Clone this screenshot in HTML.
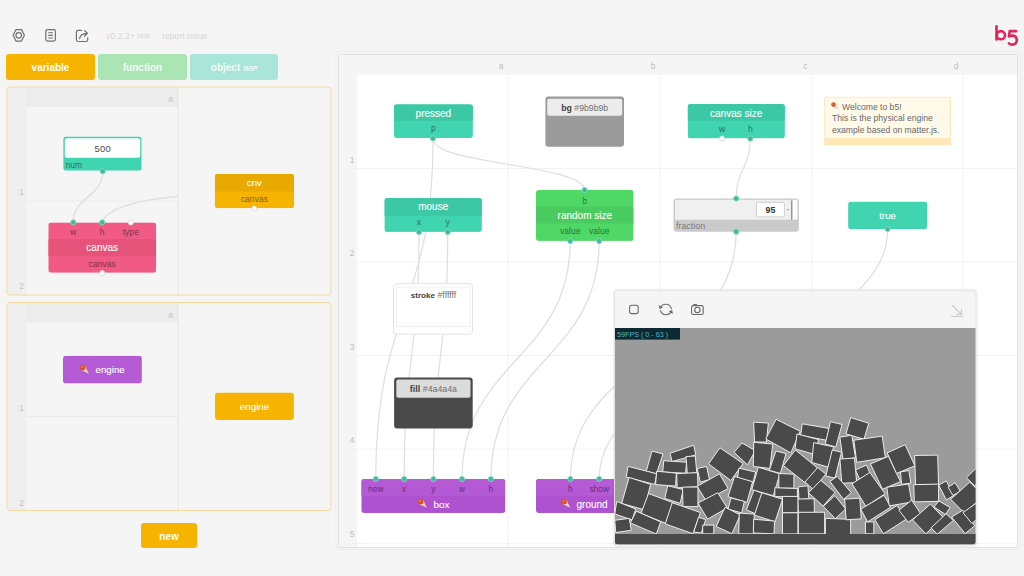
<!DOCTYPE html>
<html><head><meta charset="utf-8">
<style>
html,body{margin:0;padding:0;}
body{width:1024px;height:576px;overflow:hidden;background:#f5f5f5;position:relative;font-family:"Liberation Sans",sans-serif;}
.a{position:absolute;}
svg text{font-family:"Liberation Sans",sans-serif;}
.btn{position:absolute;top:54px;height:26px;border-radius:3px;color:#fff;font-weight:700;font-size:10px;line-height:28px;text-align:center;}
</style></head>
<body>

<svg class="a" style="left:0;top:0" width="330" height="50">
  <g fill="none" stroke="#707070" stroke-width="1.2">
    <path d="M13.1,35.35 L16,29.6 L21.5,29.6 L24.4,35.35 L21.5,41.1 L16,41.1 Z" stroke-linejoin="round"/>
    <circle cx="18.75" cy="35.35" r="2.8"/>
    <rect x="45.8" y="29.6" width="9.6" height="11.5" rx="1.8"/>
    <path d="M48.3,32.7 H52.9 M48.3,35.35 H52.9 M48.3,38 H52.9" stroke-width="1.1"/>
    <path d="M81.5,30.3 H78.2 Q76.4,30.3 76.4,32.1 V39.7 Q76.4,41.5 78.2,41.5 H85.9 Q87.7,41.5 87.7,39.7 V37.8" stroke-linecap="round" stroke-linejoin="round"/>
    <path d="M79.6,38.6 Q80.3,33.6 87,33.3 M84.6,30.6 L87.4,33.3 L84.6,36" stroke-linecap="round" stroke-linejoin="round"/>
  </g>
  <text x="106" y="39" font-size="8.8" fill="#d5d5d5">v0.2.2+<tspan font-size="6.6" dy="-1.5"> beta</tspan></text>
  <text x="162" y="39" font-size="8.7" fill="#d5d5d5">report issue</text>
</svg>
<svg class="a" style="left:0;top:0" width="1024" height="60">
  <g fill="none" stroke="#e0255e" stroke-width="2.6" stroke-linecap="round">
    <path d="M996.5,26.3 V39.5"/>
    <circle cx="1000.9" cy="35.2" r="4.1"/>
    <path d="M1016.1,31.1 H1009.7 L1008.9,36.4 Q1010.6,35.5 1012.6,35.6 Q1016.8,36 1016.8,40.3 Q1016.6,44.5 1012.4,44.6 Q1010.2,44.6 1008.9,43.3" stroke-linejoin="round"/>
  </g>
</svg>
<div class="btn" style="left:6px;width:89px;background:#f6b300;">variable</div>
<div class="btn" style="left:98px;width:89px;background:#ace5b4;color:rgba(255,255,255,0.88)">function</div>
<div class="btn" style="left:190px;width:88px;background:#a9e5d8;color:rgba(255,255,255,0.88)">object <i style="font-size:7.5px">WIP</i></div>
<div class="btn" style="left:141px;top:523px;width:56px;height:25px;line-height:27px;background:#f6b300;">new</div>

<svg class="a" style="left:0;top:0" width="1024" height="576">
<defs><filter id="sh" x="-5%" y="-5%" width="110%" height="110%"><feDropShadow dx="0" dy="0.5" stdDeviation="1" flood-color="#000" flood-opacity="0.15"/></filter></defs>
<rect x="7" y="87" width="324" height="208" rx="3" fill="#f5f5f5"/>
<rect x="8" y="87.5" width="170" height="19.5" fill="#ececec"/>
<rect x="8" y="87.5" width="18.5" height="207" fill="#efefef"/>
<line x1="26.5" y1="201" x2="178" y2="201" stroke="#ebebeb"/>
<line x1="178" y1="87" x2="178" y2="295" stroke="#efe6cf"/>
<text x="173" y="102" text-anchor="end" font-size="8.5" fill="#c3c3c3">a</text>
<text x="24" y="195" text-anchor="end" font-size="8.5" fill="#c3c3c3">1</text>
<text x="24" y="289" text-anchor="end" font-size="8.5" fill="#c3c3c3">2</text>
<rect x="7" y="87" width="324" height="208" rx="3" fill="none" stroke="#f1daa2" stroke-width="1"/>
<rect x="7" y="302.5" width="324" height="208.0" rx="3" fill="#f5f5f5"/>
<rect x="8" y="303.0" width="170" height="19.5" fill="#ececec"/>
<rect x="8" y="303.0" width="18.5" height="207.0" fill="#efefef"/>
<line x1="26.5" y1="416.6" x2="178" y2="416.6" stroke="#ebebeb"/>
<line x1="178" y1="302.5" x2="178" y2="510.5" stroke="#efe6cf"/>
<text x="173" y="317.5" text-anchor="end" font-size="8.5" fill="#c3c3c3">a</text>
<text x="24" y="411" text-anchor="end" font-size="8.5" fill="#c3c3c3">1</text>
<text x="24" y="505.5" text-anchor="end" font-size="8.5" fill="#c3c3c3">2</text>
<rect x="7" y="302.5" width="324" height="208.0" rx="3" fill="none" stroke="#f1daa2" stroke-width="1"/>
<rect x="336" y="51.3" width="684.5" height="498.2" rx="2" fill="none" stroke="#ececec" stroke-width="1"/>
<rect x="338.5" y="54.5" width="679" height="493" rx="1.5" fill="#fff" stroke="#e0e0e0"/>
<path d="M339,55 H1017 V75 H339 Z" fill="#f5f5f5"/>
<rect x="339" y="55" width="18" height="492" fill="#f5f5f5"/>
<line x1="508" y1="55" x2="508" y2="547" stroke="#f2f2f2"/>
<line x1="660" y1="55" x2="660" y2="547" stroke="#f2f2f2"/>
<line x1="812" y1="55" x2="812" y2="547" stroke="#f2f2f2"/>
<line x1="963" y1="55" x2="963" y2="547" stroke="#f2f2f2"/>
<line x1="339" y1="168.5" x2="1017" y2="168.5" stroke="#f2f2f2"/>
<line x1="339" y1="262" x2="1017" y2="262" stroke="#f2f2f2"/>
<line x1="339" y1="355.5" x2="1017" y2="355.5" stroke="#f2f2f2"/>
<line x1="339" y1="449" x2="1017" y2="449" stroke="#f2f2f2"/>
<line x1="339" y1="543.3" x2="1017" y2="543.3" stroke="#f2f2f2"/>
<text x="503.5" y="69" text-anchor="end" font-size="8.5" fill="#bdbdbd">a</text>
<text x="655.5" y="69" text-anchor="end" font-size="8.5" fill="#bdbdbd">b</text>
<text x="807.5" y="69" text-anchor="end" font-size="8.5" fill="#bdbdbd">c</text>
<text x="958.5" y="69" text-anchor="end" font-size="8.5" fill="#bdbdbd">d</text>
<text x="354.5" y="162.5" text-anchor="end" font-size="8.5" fill="#bdbdbd">1</text>
<text x="354.5" y="256" text-anchor="end" font-size="8.5" fill="#bdbdbd">2</text>
<text x="354.5" y="349.5" text-anchor="end" font-size="8.5" fill="#bdbdbd">3</text>
<text x="354.5" y="443" text-anchor="end" font-size="8.5" fill="#bdbdbd">4</text>
<text x="354.5" y="537.3" text-anchor="end" font-size="8.5" fill="#bdbdbd">5</text>
<g fill="none" stroke="#dedede" stroke-width="1.2">
<path d="M433,139 C433,164.5 584.6,164.5 584.6,190"/>
<path d="M433,139 C433,309.0 375.8,309.0 375.8,479"/>
<path d="M419,232 C419,355.5 404.2,355.5 404.2,479"/>
<path d="M447.7,232 C447.7,355.5 433.4,355.5 433.4,479"/>
<path d="M570.2,241 C570.2,360.0 462,360.0 462,479"/>
<path d="M599.2,241 C599.2,360.0 490.9,360.0 490.9,479"/>
<path d="M750.3,139 C750.3,168.75 736.2,168.75 736.2,198.5"/>
<path d="M736.2,231.7 C736.2,355.35 570.4,355.35 570.4,479"/>
<path d="M887.6,229 C887.6,354.0 599.2,354.0 599.2,479"/>
</g><g fill="none" stroke="#e0e0e0" stroke-width="1.5">
<path d="M102.7,171.3 C102.7,196.85000000000002 73.3,196.85000000000002 73.3,222.4"/>
<path d="M102.2,222.4 C108,205 150,199 178,196.5"/>
</g>
<g><clipPath id="c63_136"><rect x="63.2" y="136.5" width="78.5" height="34.2" rx="3"/></clipPath><g clip-path="url(#c63_136)"><rect x="63.2" y="136.5" width="78.5" height="34.2" rx="0" fill="#41d4b0" /></g></g>
<rect x="64.8" y="138.3" width="75.4" height="19.5" rx="2" fill="#fff" />
<text x="102.7" y="151.6" font-size="9.4" fill="#4a4a4a" text-anchor="middle" font-weight="400" letter-spacing="0.2">500</text>
<text x="65.5" y="167.6" font-size="8.5" fill="rgba(0,0,0,0.4)" text-anchor="start" font-weight="400" stroke="rgba(0,0,0,0.2)" stroke-width="0.28">num</text>
<circle cx="102.7" cy="171.3" r="2.6" fill="#46b697" stroke="#7fdcc4" stroke-width="0.9"/>
<g><clipPath id="c48_222"><rect x="48.3" y="222.4" width="107.9" height="50.4" rx="3"/></clipPath><g clip-path="url(#c48_222)"><rect x="48.3" y="222.4" width="107.9" height="50.4" rx="0" fill="#f15a84" /><rect x="48.3" y="239.2" width="107.9" height="17.1" rx="0" fill="#e5537b" /></g></g>
<text x="73.3" y="235.2" font-size="8.6" fill="rgba(0,0,0,0.4)" text-anchor="middle" font-weight="400" stroke="rgba(0,0,0,0.2)" stroke-width="0.28">w</text>
<text x="102.2" y="235.2" font-size="8.6" fill="rgba(0,0,0,0.4)" text-anchor="middle" font-weight="400" stroke="rgba(0,0,0,0.2)" stroke-width="0.28">h</text>
<text x="130.8" y="235.2" font-size="8.6" fill="rgba(0,0,0,0.4)" text-anchor="middle" font-weight="400" stroke="rgba(0,0,0,0.2)" stroke-width="0.28">type</text>
<text x="102.2" y="251.3" font-size="10" fill="#fff" text-anchor="middle" font-weight="400" stroke="#fff" stroke-width="0.1">canvas</text>
<text x="102.2" y="267" font-size="8.6" fill="rgba(0,0,0,0.4)" text-anchor="middle" font-weight="400" stroke="rgba(0,0,0,0.2)" stroke-width="0.28">canvas</text>
<circle cx="73.3" cy="222.4" r="2.6" fill="#46b697" stroke="#7fdcc4" stroke-width="0.9"/>
<circle cx="102.2" cy="222.4" r="2.6" fill="#46b697" stroke="#7fdcc4" stroke-width="0.9"/>
<circle cx="130.8" cy="222.4" r="2.6" fill="#fff" stroke="#d0d0d0" stroke-width="0.8"/>
<circle cx="102.2" cy="273" r="2.6" fill="#fff" stroke="#d0d0d0" stroke-width="0.8"/>
<g><clipPath id="c214_174"><rect x="214.8" y="174" width="79.3" height="34.2" rx="3"/></clipPath><g clip-path="url(#c214_174)"><rect x="214.8" y="174" width="79.3" height="34.2" rx="0" fill="#f6b300" /><rect x="214.8" y="174" width="79.3" height="17.4" rx="0" fill="#e9a900" /></g></g>
<text x="254.4" y="186.3" font-size="9.7" fill="#fff" text-anchor="middle" font-weight="400" stroke="#fff" stroke-width="0.1">cnv</text>
<text x="254.4" y="202.2" font-size="8.6" fill="rgba(0,0,0,0.4)" text-anchor="middle" font-weight="400" stroke="rgba(0,0,0,0.2)" stroke-width="0.28">canvas</text>
<circle cx="254.3" cy="208.5" r="2.6" fill="#fff" stroke="#d0d0d0" stroke-width="0.8"/>
<g><clipPath id="c63_355"><rect x="63" y="355.7" width="78.9" height="27.9" rx="3"/></clipPath><g clip-path="url(#c63_355)"><rect x="63" y="355.7" width="78.9" height="27.9" rx="0" fill="#b55ad5" /></g></g>
<text x="95.5" y="373" font-size="9.75" fill="#fff" text-anchor="start" font-weight="400" stroke="#fff" stroke-width="0.1">engine</text>
<g transform="translate(84.5,369.5) scale(1)"><path d="M-3.9,0.3 L4.3,4.3 L0.3,-3.9 Z" fill="#f6d2bd"/><circle cx="-1.8" cy="-1.8" r="2.6" fill="#d9501a"/><circle cx="-2.5" cy="-2.5" r="0.9" fill="#ee8a52"/></g>
<g><clipPath id="c215_392"><rect x="215" y="392.5" width="78.9" height="27.5" rx="3"/></clipPath><g clip-path="url(#c215_392)"><rect x="215" y="392.5" width="78.9" height="27.5" rx="0" fill="#f6b300" /></g></g>
<text x="254.5" y="410" font-size="9.75" fill="#fff" text-anchor="middle" font-weight="400" stroke="#fff" stroke-width="0.1">engine</text>
<g><clipPath id="c394_104"><rect x="394" y="104.3" width="78.9" height="33.7" rx="3"/></clipPath><g clip-path="url(#c394_104)"><rect x="394" y="104.3" width="78.9" height="33.7" rx="0" fill="#41d4b0" /><rect x="394" y="104.3" width="78.9" height="16.6" rx="0" fill="#3cc8a5" /></g></g>
<text x="433.4" y="116.8" font-size="10" fill="#fff" text-anchor="middle" font-weight="400" stroke="#fff" stroke-width="0.1">pressed</text>
<text x="433.4" y="131.3" font-size="8.6" fill="rgba(0,0,0,0.4)" text-anchor="middle" font-weight="400" stroke="rgba(0,0,0,0.2)" stroke-width="0.28">p</text>
<circle cx="433" cy="138.4" r="2.6" fill="#46b697" stroke="#7fdcc4" stroke-width="0.9"/>
<rect x="545.4" y="96.5" width="78.6" height="50.3" rx="3" fill="#9b9b9b" />
<rect x="547.2" y="98.7" width="75.0" height="17.1" rx="2" fill="#ececec" />
<text x="584.7" y="111" font-size="8.7" text-anchor="middle"><tspan font-weight="700" font-size="8.8" fill="#444">bg</tspan><tspan fill="#6f6f6f"> #9b9b9b</tspan></text>
<g><clipPath id="c687_104"><rect x="687.6" y="104.1" width="97.3" height="34.3" rx="3"/></clipPath><g clip-path="url(#c687_104)"><rect x="687.6" y="104.1" width="97.3" height="34.3" rx="0" fill="#41d4b0" /><rect x="687.6" y="104.1" width="97.3" height="16.7" rx="0" fill="#3cc8a5" /></g></g>
<text x="736.2" y="116.9" font-size="10" fill="#fff" text-anchor="middle" font-weight="400" stroke="#fff" stroke-width="0.1">canvas size</text>
<text x="722" y="131.5" font-size="8.6" fill="rgba(0,0,0,0.4)" text-anchor="middle" font-weight="400" stroke="rgba(0,0,0,0.2)" stroke-width="0.28">w</text>
<text x="750.3" y="131.5" font-size="8.6" fill="rgba(0,0,0,0.4)" text-anchor="middle" font-weight="400" stroke="rgba(0,0,0,0.2)" stroke-width="0.28">h</text>
<circle cx="722" cy="138.5" r="2.6" fill="#fff" stroke="#d0d0d0" stroke-width="0.8"/>
<circle cx="750.3" cy="138.5" r="2.6" fill="#46b697" stroke="#7fdcc4" stroke-width="0.9"/>
<rect x="824.2" y="96.8" width="126.8" height="48.4" rx="0" fill="#fde8b6" />
<rect x="825" y="97.6" width="125.2" height="40.6" rx="0" fill="#fff9ea" />
<text x="842" y="109.8" font-size="8.6" fill="#686868" text-anchor="start" font-weight="400" >Welcome to b5!</text>
<text x="832" y="121.3" font-size="8.6" fill="#686868" text-anchor="start" font-weight="400" >This is the physical engine</text>
<text x="832" y="132.8" font-size="8.6" fill="#686868" text-anchor="start" font-weight="400" >example based on matter.js.</text>
<g transform="translate(835,106) scale(0.85)"><path d="M-3.9,0.3 L4.3,4.3 L0.3,-3.9 Z" fill="#f6d2bd"/><circle cx="-1.8" cy="-1.8" r="2.6" fill="#d9501a"/><circle cx="-2.5" cy="-2.5" r="0.9" fill="#ee8a52"/></g>
<g><clipPath id="c384_198"><rect x="384.4" y="198.1" width="97.5" height="33.8" rx="3"/></clipPath><g clip-path="url(#c384_198)"><rect x="384.4" y="198.1" width="97.5" height="33.8" rx="0" fill="#41d4b0" /><rect x="384.4" y="198.1" width="97.5" height="17.6" rx="0" fill="#3cc8a5" /></g></g>
<text x="433.2" y="209.8" font-size="10" fill="#fff" text-anchor="middle" font-weight="400" stroke="#fff" stroke-width="0.1">mouse</text>
<text x="419" y="225" font-size="8.6" fill="rgba(0,0,0,0.4)" text-anchor="middle" font-weight="400" stroke="rgba(0,0,0,0.2)" stroke-width="0.28">x</text>
<text x="447.7" y="225" font-size="8.6" fill="rgba(0,0,0,0.4)" text-anchor="middle" font-weight="400" stroke="rgba(0,0,0,0.2)" stroke-width="0.28">y</text>
<circle cx="419" cy="232" r="2.6" fill="#46b697" stroke="#7fdcc4" stroke-width="0.9"/>
<circle cx="447.7" cy="232" r="2.6" fill="#46b697" stroke="#7fdcc4" stroke-width="0.9"/>
<g><clipPath id="c536_190"><rect x="536" y="190" width="97.6" height="50.9" rx="3"/></clipPath><g clip-path="url(#c536_190)"><rect x="536" y="190" width="97.6" height="50.9" rx="0" fill="#50d867" /><rect x="536" y="206.7" width="97.6" height="16.8" rx="0" fill="#4acb5f" /></g></g>
<text x="584.8" y="203.5" font-size="8.6" fill="rgba(0,0,0,0.4)" text-anchor="middle" font-weight="400" stroke="rgba(0,0,0,0.2)" stroke-width="0.28">b</text>
<text x="584.8" y="219" font-size="10" fill="#fff" text-anchor="middle" font-weight="400" stroke="#fff" stroke-width="0.1">random size</text>
<text x="570.2" y="233.5" font-size="8.6" fill="rgba(0,0,0,0.4)" text-anchor="middle" font-weight="400" stroke="rgba(0,0,0,0.2)" stroke-width="0.28">value</text>
<text x="599.2" y="233.5" font-size="8.6" fill="rgba(0,0,0,0.4)" text-anchor="middle" font-weight="400" stroke="rgba(0,0,0,0.2)" stroke-width="0.28">value</text>
<circle cx="584.6" cy="190" r="2.6" fill="#46b697" stroke="#7fdcc4" stroke-width="0.9"/>
<circle cx="570.2" cy="241" r="2.6" fill="#46b697" stroke="#7fdcc4" stroke-width="0.9"/>
<circle cx="599.2" cy="241" r="2.6" fill="#46b697" stroke="#7fdcc4" stroke-width="0.9"/>
<rect x="673.5" y="198.5" width="125.4" height="33.2" rx="3" fill="#cacaca" />
<rect x="675" y="199.8" width="116.5" height="19.9" rx="0" fill="#f0f0f0" />
<rect x="792.2" y="199.8" width="5.3" height="19.9" rx="0" fill="#fcfcfc" />
<rect x="791.3" y="200.5" width="1.0" height="19.2" rx="0" fill="#777" />
<rect x="756.4" y="202.3" width="28.0" height="14.6" rx="1.5" fill="#fff" stroke="#c4c4c4" stroke-width="0.8"/>
<text x="770.5" y="212.8" font-size="8.8" fill="#333" text-anchor="middle" font-weight="700" >95</text>
<rect x="787.3" y="209" width="1.7" height="1.2" rx="0" fill="#999" />
<text x="676" y="229.2" font-size="8.9" fill="rgba(0,0,0,0.45)" text-anchor="start" font-weight="400" >fraction</text>
<circle cx="736.2" cy="198.5" r="2.6" fill="#46b697" stroke="#7fdcc4" stroke-width="0.9"/>
<circle cx="736.2" cy="231.7" r="2.6" fill="#46b697" stroke="#7fdcc4" stroke-width="0.9"/>
<g><clipPath id="c848_201"><rect x="848.1" y="201.6" width="79.1" height="27.6" rx="3"/></clipPath><g clip-path="url(#c848_201)"><rect x="848.1" y="201.6" width="79.1" height="27.6" rx="0" fill="#41d4b0" /></g></g>
<text x="887.6" y="219" font-size="9.7" fill="#fff" text-anchor="middle" font-weight="400" stroke="#fff" stroke-width="0.1">true</text>
<circle cx="887.6" cy="229" r="2.6" fill="#46b697" stroke="#7fdcc4" stroke-width="0.9"/>
<rect x="393.5" y="283.7" width="79.0" height="50.5" rx="3" fill="#fff" stroke="#e2e2e2" stroke-width="1"/>
<rect x="396.5" y="287" width="73.5" height="39.6" rx="0" fill="#fff" stroke="#ececec" stroke-width="0.8"/>
<text x="433.5" y="297.8" font-size="8.8" text-anchor="middle"><tspan font-weight="700" font-size="8.1" fill="#444">stroke</tspan><tspan fill="#6f6f6f"> #ffffff</tspan></text>
<rect x="394.1" y="377.4" width="78.6" height="51.0" rx="3" fill="#4a4a4a" />
<rect x="396.3" y="379.6" width="74.2" height="18.2" rx="2" fill="#dcdcdc" />
<text x="433.4" y="392.2" font-size="8.8" text-anchor="middle"><tspan font-weight="700" font-size="9" fill="#444">fill</tspan><tspan fill="#6f6f6f"> #4a4a4a</tspan></text>
<g><clipPath id="c361_479"><rect x="361.3" y="479" width="144.0" height="34" rx="3"/></clipPath><g clip-path="url(#c361_479)"><rect x="361.3" y="479" width="144.0" height="34" rx="0" fill="#ae52cf" /><rect x="361.3" y="479" width="144.0" height="16.8" rx="0" fill="#b55ad5" /></g></g>
<text x="375.8" y="492" font-size="8.4" fill="rgba(0,0,0,0.4)" text-anchor="middle" font-weight="400" stroke="rgba(0,0,0,0.2)" stroke-width="0.28">new</text>
<circle cx="375.8" cy="479" r="2.6" fill="#46b697" stroke="#7fdcc4" stroke-width="0.9"/>
<text x="404.2" y="492" font-size="8.4" fill="rgba(0,0,0,0.4)" text-anchor="middle" font-weight="400" stroke="rgba(0,0,0,0.2)" stroke-width="0.28">x</text>
<circle cx="404.2" cy="479" r="2.6" fill="#46b697" stroke="#7fdcc4" stroke-width="0.9"/>
<text x="433.4" y="492" font-size="8.4" fill="rgba(0,0,0,0.4)" text-anchor="middle" font-weight="400" stroke="rgba(0,0,0,0.2)" stroke-width="0.28">y</text>
<circle cx="433.4" cy="479" r="2.6" fill="#46b697" stroke="#7fdcc4" stroke-width="0.9"/>
<text x="462" y="492" font-size="8.4" fill="rgba(0,0,0,0.4)" text-anchor="middle" font-weight="400" stroke="rgba(0,0,0,0.2)" stroke-width="0.28">w</text>
<circle cx="462" cy="479" r="2.6" fill="#46b697" stroke="#7fdcc4" stroke-width="0.9"/>
<text x="490.9" y="492" font-size="8.4" fill="rgba(0,0,0,0.4)" text-anchor="middle" font-weight="400" stroke="rgba(0,0,0,0.2)" stroke-width="0.28">h</text>
<circle cx="490.9" cy="479" r="2.6" fill="#46b697" stroke="#7fdcc4" stroke-width="0.9"/>
<text x="433.5" y="508" font-size="9.8" fill="#fff" text-anchor="start" font-weight="400" stroke="#fff" stroke-width="0.1">box</text>
<g transform="translate(422.5,503.5) scale(1)"><path d="M-3.9,0.3 L4.3,4.3 L0.3,-3.9 Z" fill="#f6d2bd"/><circle cx="-1.8" cy="-1.8" r="2.6" fill="#d9501a"/><circle cx="-2.5" cy="-2.5" r="0.9" fill="#ee8a52"/></g>
<g><clipPath id="c536_479"><rect x="536" y="479" width="124" height="34" rx="3"/></clipPath><g clip-path="url(#c536_479)"><rect x="536" y="479" width="124" height="34" rx="0" fill="#ae52cf" /><rect x="536" y="479" width="124" height="16.8" rx="0" fill="#b55ad5" /></g></g>
<text x="570.4" y="492" font-size="8.4" fill="rgba(0,0,0,0.4)" text-anchor="middle" font-weight="400" stroke="rgba(0,0,0,0.2)" stroke-width="0.28">h</text>
<circle cx="570.4" cy="479" r="2.6" fill="#46b697" stroke="#7fdcc4" stroke-width="0.9"/>
<text x="599.2" y="492" font-size="8.4" fill="rgba(0,0,0,0.4)" text-anchor="middle" font-weight="400" stroke="rgba(0,0,0,0.2)" stroke-width="0.28">show</text>
<circle cx="599.2" cy="479" r="2.6" fill="#46b697" stroke="#7fdcc4" stroke-width="0.9"/>
<text x="576.5" y="508" font-size="10" fill="#fff" text-anchor="start" font-weight="400" stroke="#fff" stroke-width="0.1">ground</text>
<g transform="translate(566,503.5) scale(1)"><path d="M-3.9,0.3 L4.3,4.3 L0.3,-3.9 Z" fill="#f6d2bd"/><circle cx="-1.8" cy="-1.8" r="2.6" fill="#d9501a"/><circle cx="-2.5" cy="-2.5" r="0.9" fill="#ee8a52"/></g>
<rect x="614.5" y="290.2" width="361.5" height="254.6" rx="1.5" fill="#f5f5f5" stroke="#e0e0e0" stroke-width="1" filter="url(#sh)"/>
<rect x="615" y="328" width="360.5" height="216.3" fill="#9b9b9b"/>
<clipPath id="cvs"><rect x="615" y="328" width="360.5" height="206"/></clipPath>
<g clip-path="url(#cvs)" fill="#4a4a4a" stroke="#ececec" stroke-width="1" stroke-linejoin="round">
<polygon points="753.64,422.1 768.33,423.08 766.44,442.01 754.59,442.01"/>
<polygon points="651.94,451.1 663.0,453.92 656.4,473.89 646.29,471.26"/>
<polygon points="670.06,453.25 693.73,445.23 695.79,454.9 672.14,461.61"/>
<polygon points="663.74,460.7 686.59,462.2 685.59,473.26 662.74,471.95"/>
<polygon points="685.96,456.58 695.25,455.96 696.78,472.61 687.3,473.64"/>
<polygon points="628.15,466.39 656.75,473.77 654.74,484.45 626.13,477.07"/>
<polygon points="656.71,471.23 676.37,473.12 675.59,486.1 655.54,484.58"/>
<polygon points="676.66,473.61 697.39,472.67 697.98,486.71 677.25,487.85"/>
<polygon points="697.3,468.47 706.57,466.42 709.51,479.51 700.24,482.19"/>
<polygon points="708.6,463.88 719.92,447.82 743.07,463.56 730.8,480.54"/>
<polygon points="734.08,452.36 741.92,442.97 755.32,450.63 747.53,464.85"/>
<polygon points="753.69,442.22 772.74,444.12 769.94,468.38 753.32,466.46"/>
<polygon points="775.89,451.12 786.01,453.55 780.35,473.38 769.3,470.36"/>
<polygon points="738.85,468.15 755.58,472.0 753.14,482.13 737.43,478.87"/>
<polygon points="758.3,467.24 779.86,473.81 773.31,495.7 751.75,489.7"/>
<polygon points="697.15,486.33 719.48,473.85 728.1,488.62 705.79,500.33"/>
<polygon points="629.11,477.43 650.63,484.36 644.14,509.77 621.68,503.41"/>
<polygon points="667.73,485.73 683.14,489.59 680.19,503.3 664.78,498.48"/>
<polygon points="682.47,487.11 697.95,487.11 697.95,506.62 683.04,506.62"/>
<polygon points="698.03,503.0 717.72,492.69 727.24,507.92 707.55,519.17"/>
<polygon points="734.58,476.4 752.6,481.71 746.96,502.4 728.0,496.72"/>
<polygon points="731.04,498.05 744.31,501.36 741.72,512.95 728.03,509.03"/>
<polygon points="648.5,493.59 673.54,502.87 666.02,523.54 640.98,513.34"/>
<polygon points="672.2,502.74 700.44,512.52 692.94,533.7 665.26,523.92"/>
<polygon points="616.72,501.42 635.72,509.02 632.13,520.0 614.74,513.95"/>
<polygon points="614.77,520.25 629.28,518.32 631.27,530.24 615.75,532.56"/>
<polygon points="636.28,511.16 660.69,521.88 656.35,534.1 630.38,522.97"/>
<polygon points="698.56,517.35 705.7,519.52 701.25,533.06 693.69,531.97"/>
<polygon points="702.7,525.08 713.77,525.08 713.77,533.86 702.7,533.86"/>
<polygon points="725.05,507.25 740.35,514.9 731.88,533.74 716.19,526.47"/>
<polygon points="739.29,513.08 754.2,514.05 754.2,533.86 738.72,533.86"/>
<polygon points="753.97,490.08 762.28,493.19 755.69,513.91 746.46,509.8"/>
<polygon points="761.84,492.73 782.52,499.31 775.04,521.74 754.37,515.16"/>
<polygon points="753.7,519.22 774.44,521.1 774.04,533.89 753.31,532.95"/>
<polygon points="776.1,419.27 800.21,431.27 790.84,452.89 765.76,438.98"/>
<polygon points="802.26,423.8 829.15,428.43 827.15,440.37 800.66,435.36"/>
<polygon points="830.46,421.65 842.04,424.45 835.86,446.9 825.21,444.09"/>
<polygon points="850.72,417.58 868.76,423.27 863.96,439.19 845.93,433.87"/>
<polygon points="796.99,433.92 818.64,439.58 814.78,454.48 795.05,448.85"/>
<polygon points="839.85,437.21 851.77,435.22 855.52,457.71 843.04,459.69"/>
<polygon points="853.93,440.19 882.19,436.12 885.38,457.71 856.74,462.33"/>
<polygon points="783.42,465.61 795.35,449.9 817.52,468.0 806.16,483.54"/>
<polygon points="813.66,442.67 833.57,446.84 828.86,467.24 811.77,462.49"/>
<polygon points="832.22,450.07 841.49,452.13 835.0,478.09 825.73,476.04"/>
<polygon points="839.89,459.04 854.46,458.07 856.7,482.5 841.75,483.27"/>
<polygon points="855.54,469.87 866.5,465.1 870.57,474.65 859.61,479.23"/>
<polygon points="870.45,463.9 888.45,456.33 900.48,481.67 882.48,489.24"/>
<polygon points="887.17,452.83 905.15,444.7 914.88,465.86 896.53,473.42"/>
<polygon points="900.54,471.94 908.9,470.48 910.88,483.14 901.53,484.38"/>
<polygon points="914.63,455.48 937.65,455.11 938.57,484.63 915.55,485.01"/>
<polygon points="805.04,481.89 817.71,467.51 825.81,474.19 813.11,489.35"/>
<polygon points="829.99,481.51 837.25,476.32 851.3,492.81 843.52,499.37"/>
<polygon points="808.52,492.76 820.73,480.36 835.14,492.3 823.13,506.04"/>
<polygon points="798.24,486.83 807.89,485.81 808.87,498.64 799.04,499.66"/>
<polygon points="797.73,499.08 814.08,498.69 814.47,512.4 798.31,512.79"/>
<polygon points="798.28,512.25 824.64,512.25 824.64,533.86 798.28,533.86"/>
<polygon points="825.35,518.37 850.66,519.31 850.66,534.74 825.35,534.74"/>
<polygon points="823.3,506.42 834.91,495.57 845.64,508.97 835.35,518.67"/>
<polygon points="844.64,499.11 859.75,498.15 861.26,518.87 846.15,519.84"/>
<polygon points="851.99,483.72 869.84,472.45 885.05,493.8 865.91,506.37"/>
<polygon points="860.81,509.17 883.96,495.29 890.8,507.03 867.63,521.86"/>
<polygon points="874.84,519.76 897.1,505.48 906.12,519.31 883.49,533.78"/>
<polygon points="886.8,487.22 908.54,484.03 911.76,502.09 889.26,505.85"/>
<polygon points="898.9,510.19 911.64,500.15 920.71,513.67 908.17,522.16"/>
<polygon points="913.75,484.67 938.55,484.1 938.55,501.32 914.32,501.89"/>
<polygon points="912.58,519.94 930.33,504.07 943.06,517.36 925.88,533.8"/>
<polygon points="934.01,506.96 938.92,500.97 950.1,507.44 945.43,514.45"/>
<polygon points="931.04,527.87 946.11,513.75 953.31,520.54 937.28,534.11"/>
<polygon points="938.67,485.06 946.42,480.88 953.52,495.65 946.36,499.87"/>
<polygon points="948.17,487.24 955.13,482.6 960.26,491.23 952.88,495.44"/>
<polygon points="865.43,521.92 873.86,521.92 873.86,533.86 865.43,533.86"/>
<polygon points="778.8,473.57 793.9,474.13 793.9,488.2 778.8,488.2"/>
<polygon points="774.8,487.78 797.4,488.52 797.4,496.91 774.8,496.59"/>
<polygon points="782.5,496.4 797.9,496.4 797.9,512.7 782.5,512.7"/>
<polygon points="782.5,512.8 797.9,512.8 797.9,533.9 782.5,533.9"/>
<polygon points="969.85,482.01 983.47,495.81 964.54,513.25 950.74,499.27"/>
<polygon points="975.44,468.83 983.45,476.84 974.56,485.73 966.55,477.72"/>
<polygon points="962.99,510.12 974.64,525.72 965.17,533.62 951.58,517.01"/>
<polygon points="975.58,503.59 983.43,513.79 971.84,523.45 963.03,512.68"/>
</g>
<path d="M615,534 H975.5 V541.3 Q975.5,544.3 972.5,544.3 H618 Q615,544.3 615,541.3 Z" fill="#4a4a4a"/>
<rect x="615" y="328" width="65" height="11.6" fill="#0d2a33"/>
<text x="617" y="337" font-size="7.2" fill="#52b3c4">59FPS ( 0 - 63 )</text>
<g fill="none" stroke="#6a6a6a" stroke-width="1.1"><rect x="629.6" y="305.2" width="8.6" height="8.4" rx="2.2"/><path d="M671.4,308.6 C670.5,305.4 668,304.2 665.8,304.2 C663.5,304.2 661.3,305.4 660.6,307.6" stroke-linecap="round"/><path d="M660.5,310.6 C661.3,313.4 663.6,314.7 665.8,314.7 C668.2,314.7 670.3,313.4 671.2,311.2" stroke-linecap="round"/><rect x="691.6" y="305.6" width="11.6" height="8.9" rx="1.6"/><circle cx="697.4" cy="310" r="2.7"/><path d="M693.8,304.6 H696.6" stroke-linecap="round"/></g>
<g fill="#6a6a6a"><path d="M658.7,304.9 L659.6,309 L663.1,307.4 Z"/><path d="M672.9,314.1 L672.1,310 L668.7,311.5 Z"/></g>
<g fill="none" stroke="#c9c9c9" stroke-width="1.1" stroke-linecap="round"><path d="M952.5,305.5 L961.5,314.5 M961.5,309.5 V314.5 H956.5 M951.5,316.5 H963"/></g>
</svg>
</body></html>
